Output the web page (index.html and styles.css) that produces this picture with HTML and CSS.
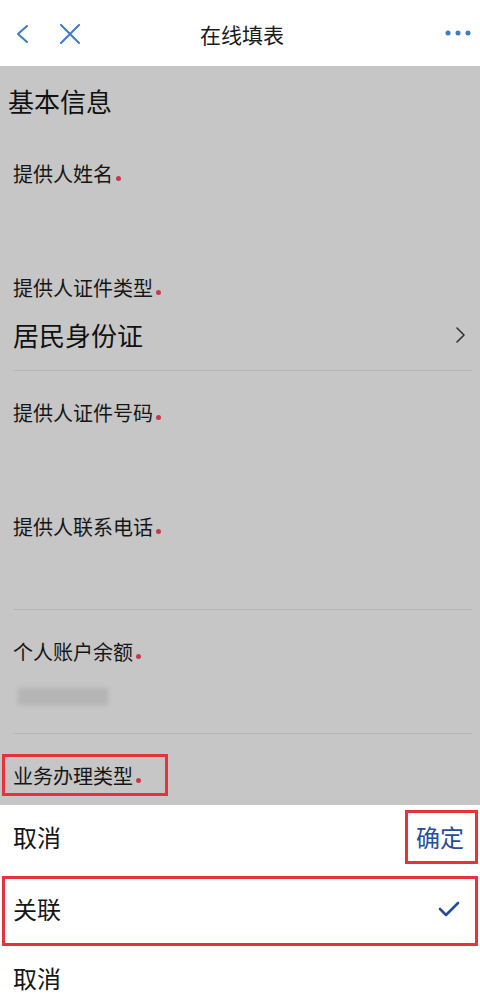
FILE: index.html
```html
<!DOCTYPE html>
<html lang="zh-CN">
<head>
<meta charset="utf-8">
<title>在线填表</title>
<link rel="stylesheet" href="styles.css">
</head>
<body>
<header class="topbar">
  <div class="nav-left">
    <svg class="icon-back" width="14" height="20" viewBox="0 0 14 20"><path d="M11 2 L2 10 L11 18" fill="none" stroke="#3b7bc8" stroke-width="2" stroke-linecap="round" stroke-linejoin="round"/></svg>
    <svg class="icon-close" width="22" height="20" viewBox="0 0 22 20"><path d="M2 1 L20 19 M20 1 L2 19" fill="none" stroke="#3b7bc8" stroke-width="2" stroke-linecap="round"/></svg>
  </div>
  <h1 class="title">在线填表</h1>
  <div class="nav-right">
    <svg width="28" height="8" viewBox="0 0 28 8"><circle cx="4" cy="4" r="2.5" fill="#3b7bc8"/><circle cx="14" cy="4" r="2.5" fill="#3b7bc8"/><circle cx="24" cy="4" r="2.5" fill="#3b7bc8"/></svg>
  </div>
</header>

<main class="form">
  <h2 class="section-title">基本信息</h2>

  <div class="field field--short">
    <div class="label">提供人姓名<i class="req"></i></div>
    <div class="value"></div>
  </div>

  <div class="field">
    <div class="label">提供人证件类型<i class="req"></i></div>
    <div class="value value--select">
      <span>居民身份证</span>
      <svg width="12" height="18" viewBox="0 0 12 18"><path d="M2 2 L9 9 L2 16" fill="none" stroke="#333" stroke-width="1.6" stroke-linecap="round" stroke-linejoin="round"/></svg>
    </div>
  </div>

  <div class="field field--short">
    <div class="label">提供人证件号码<i class="req"></i></div>
    <div class="value"></div>
  </div>

  <div class="field">
    <div class="label">提供人联系电话<i class="req"></i></div>
    <div class="value"></div>
  </div>

  <div class="field field--amount">
    <div class="label">个人账户余额<i class="req"></i></div>
    <div class="value"><span class="blurred"></span></div>
  </div>

  <div class="field field--last">
    <div class="label label--marked">业务办理类型<i class="req"></i></div>
  </div>
</main>

<section class="sheet">
  <div class="sheet-head">
    <span class="sheet-cancel">取消</span>
    <span class="sheet-ok">确定</span>
  </div>
  <div class="option option--selected">
    <span>关联</span>
    <svg width="22" height="16" viewBox="0 0 22 16"><path d="M2 8 L8 14 L20 2" fill="none" stroke="#264d9a" stroke-width="2.6" stroke-linecap="round" stroke-linejoin="round"/></svg>
  </div>
  <div class="option">
    <span>取消</span>
  </div>
</section>
</body>
</html>
```

FILE: styles.css
```css
* { box-sizing: border-box; }

html, body {
  margin: 0;
  padding: 0;
  width: 480px;
  height: 1002px;
  overflow: hidden;
  background: #ffffff;
  font-family: "Noto Sans CJK SC", "Noto Sans", sans-serif;
  color: #161616;
}

.topbar {
  height: 66px;
  background: #ffffff;
  display: grid;
  grid-template-columns: 1fr auto 1fr;
  align-items: center;
  padding: 0 8px 0 16px;
}

.nav-left {
  display: flex;
  align-items: center;
  gap: 29px;
  padding-top: 2px;
}

.title {
  margin: 0 0 0 -4px;
  font-size: 21px;
  font-weight: 400;
  line-height: 30px;
  color: #1a1a1a;
  padding-top: 2px;
}

.nav-right {
  display: flex;
  justify-content: flex-end;
}

.nav-right svg { display: block; }

.form {
  height: 739px;
  overflow: hidden;
  background: #c6c6c6;
  padding: 18px 8px 0 8px;
}

.section-title {
  margin: 0 0 14px 0;
  font-size: 26px;
  font-weight: 400;
  line-height: 34px;
  color: #111;
}

.field {
  margin-left: 5px;
  padding-top: 29px;
}

.label {
  font-size: 20px;
  line-height: 26px;
  color: #161616;
}

.req {
  display: inline-block;
  width: 5px;
  height: 5px;
  border-radius: 50%;
  background: #c43a4a;
  margin-left: 3px;
  vertical-align: 1px;
}

.value {
  height: 70px;
  border-bottom: 1px solid #b6b6b6;
}

.field--short .value {
  height: 59px;
  border-bottom: none;
}

.field--amount .value {
  height: 69px;
  display: flex;
  align-items: center;
  padding-left: 5px;
}

.blurred {
  display: block;
  width: 90px;
  height: 17px;
  background: #b4b4b4;
  filter: blur(2px);
  margin-top: -6px;
}

.value--select {
  display: flex;
  align-items: center;
  justify-content: space-between;
  font-size: 26px;
  color: #111;
  padding-right: 5px;
  padding-bottom: 2px;
}

.value--select svg { display: block; }

.label--marked {
  display: inline-block;
  border: 3px solid #e5323d;
  padding: 6px 24px 4px 8px;
  margin: -9px 0 -7px -11px;
}

.sheet {
  background: #ffffff;
}

.sheet-head {
  height: 71px;
  display: flex;
  align-items: center;
  justify-content: space-between;
  padding: 0 2px 8px 13px;
}

.sheet-cancel {
  font-size: 24px;
  line-height: 32px;
  color: #161616;
}

.sheet-ok {
  display: inline-block;
  font-size: 24px;
  line-height: 24px;
  color: #264d9a;
  border: 3px solid #e5323d;
  padding: 12px 11px 12px 8px;
}

.option {
  height: 68px;
  display: flex;
  align-items: center;
  justify-content: space-between;
  padding: 0 15px 6px 13px;
  font-size: 24px;
  color: #161616;
}

.option--selected {
  height: 70px;
  margin: 0 2px;
  border: 3px solid #e5323d;
  padding: 0 15px 6px 8px;
}

.option svg { display: block; margin-top: 2px; }
```
